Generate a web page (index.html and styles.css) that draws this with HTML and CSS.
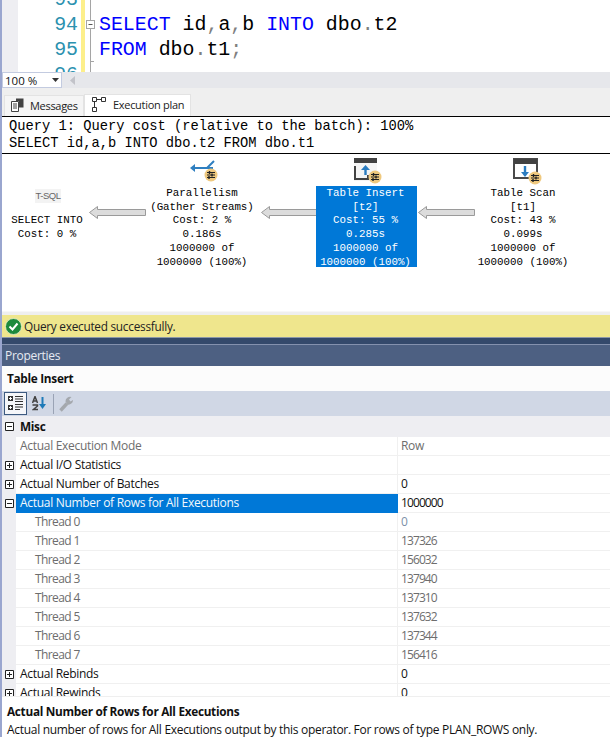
FILE: index.html
```html
<!DOCTYPE html>
<html lang="en">
<head>
<meta charset="utf-8">
<title>Execution plan</title>
<link rel="stylesheet" href="styles.css">
</head>
<body>
<svg class="defs" width="0" height="0">
  <defs>
    <g id="badge">
      <circle cx="7" cy="7" r="6.5" fill="#efc97f"/>
      <path d="M3 4.5h8M3 7h8M3 9.5h8" stroke="#222" stroke-width="1.2"/>
      <path d="M5.5 3v3M8 5.5v3M5 8v3" stroke="#222" stroke-width="1.4"/>
    </g>
  </defs>
</svg>
<main class="window">
  <section class="editor">
    <div class="margin"></div>
    <div class="numbers">
      <div class="line">93</div>
      <div class="line">94</div>
      <div class="line">95</div>
      <div class="line">96</div>
    </div>
    <div class="change"></div>
    <div class="fold">
      <svg width="14" height="72" viewBox="0 0 14 72">
        <path d="M5.500 0V20M5.500 29V72M5.500 61.500H9" stroke="#a5a5a5" fill="none"/>
        <rect x="1.500" y="20.500" width="8" height="8" fill="#fff" stroke="#a5a5a5"/>
        <path d="M3.500 24.500h4" stroke="#555"/>
      </svg>
    </div>
    <div class="code">
      <div class="line"></div>
      <div class="line"><span class="kw">SELECT</span> id<span class="op">,</span>a<span class="op">,</span>b <span class="kw">INTO</span> dbo<span class="op">.</span>t2</div>
      <div class="line"><span class="kw">FROM</span> dbo<span class="op">.</span>t1<span class="op">;</span></div>
    </div>
  </section>

  <div class="zoombar">
    <div class="combo"><span>100 %</span><svg width="7" height="4" viewBox="0 0 7 4"><path d="M0 0h7L3.500 4z" fill="#333"/></svg></div>
    <svg class="scroll-left" width="6" height="9" viewBox="0 0 6 9"><path d="M5 0v9L0 4.500z" fill="#c2c3c9"/></svg>
  </div>

  <div class="tabs">
    <div class="tab">
      <svg width="13" height="14" viewBox="0 0 13 14">
        <path d="M.500 3.500h7v10h-7z" fill="#fff" stroke="#424242"/>
        <path d="M2 6h4M2 8h4M2 10h4" stroke="#424242"/>
        <path d="M5 .500h7.500v9H8V3H5z" fill="#424242"/>
      </svg>
      <span>Messages</span>
    </div>
    <div class="tab tab-active">
      <svg width="15" height="16" viewBox="0 0 15 16">
        <path d="M.500.500h4v4h-4zM9.500.500h4v4h-4zM.500 10.500h4v4h-4z" fill="#fff" stroke="#333"/>
        <path d="M4.500 2.500h5M2.500 4.500v6" stroke="#333"/>
      </svg>
      <span>Execution plan</span>
    </div>
  </div>

  <section class="plan">
    <div class="plan-head">
      <div class="plan-line">Query 1: Query cost (relative to the batch): 100%</div>
      <div class="plan-line">SELECT id,a,b INTO dbo.t2 FROM dbo.t1</div>
    </div>
    <div class="canvas">
      <div class="tsql">T-SQL</div>
      <div class="node node-select">SELECT INTO<br>Cost: 0 %</div>

      <svg class="arrow arrow-a" width="57" height="13" viewBox="0 0 57 13"><path d="M.500 6.500 8.500 .500v3h48v6h-48v3z" fill="#dcdcdc" stroke="#9a9a9a"/></svg>

      <svg class="icon icon-par" width="30" height="28" viewBox="0 0 30 28">
        <path d="M3 10h15l7-7M18 10l6 0" fill="none" stroke="#2f7fc0" stroke-width="2"/>
        <path d="M1 10l5-4v8z" fill="#2f7fc0"/>
        <use href="#badge" x="15" y="10"/>
      </svg>
      <div class="node node-par">Parallelism<br>(Gather Streams)<br>Cost: 2 %<br>0.186s<br>1000000 of<br>1000000 (100%)</div>

      <svg class="arrow arrow-b" width="57" height="13" viewBox="0 0 57 13"><path d="M.500 6.500 8.500 .500v3h48v6h-48v3z" fill="#dcdcdc" stroke="#9a9a9a"/></svg>

      <svg class="icon icon-ins" width="30" height="28" viewBox="0 0 30 28">
        <rect x="1" y="1" width="23" height="23" fill="#f5f5f5"/>
        <rect x="1" y="1" width="23" height="5" fill="#424242"/>
        <path d="M2 9v13h13v-4" fill="none" stroke="#424242" stroke-width="2"/>
        <path d="M12.500 18V10" stroke="#2a7cc0" stroke-width="2.400"/>
        <path d="M8 13l4.500-5 4.500 5z" fill="#2a7cc0"/>
        <use href="#badge" x="15" y="13"/>
      </svg>
      <div class="node node-ins">Table Insert<br>[t2]<br>Cost: 55 %<br>0.285s<br>1000000 of<br>1000000 (100%)</div>

      <svg class="arrow arrow-c" width="57" height="13" viewBox="0 0 57 13"><path d="M.500 6.500 8.500 .500v3h48v6h-48v3z" fill="#dcdcdc" stroke="#9a9a9a"/></svg>

      <svg class="icon icon-scan" width="30" height="28" viewBox="0 0 30 28">
        <rect x="1" y="1" width="23" height="19" fill="#fff" stroke="#4a4a4a" stroke-width="2"/>
        <rect x="1" y="1" width="23" height="5" fill="#424242"/>
        <path d="M12 8v8" stroke="#2a7cc0" stroke-width="2.400"/>
        <path d="M8 14l4 5 4-5z" fill="#2a7cc0"/>
        <use href="#badge" x="15" y="13"/>
      </svg>
      <div class="node node-scan">Table Scan<br>[t1]<br>Cost: 43 %<br>0.099s<br>1000000 of<br>1000000 (100%)</div>
    </div>
  </section>

  <div class="status-gap"></div>
  <div class="status">
    <svg width="17" height="17" viewBox="0 0 17 17">
      <circle cx="8.500" cy="8.500" r="8" fill="#1d8a3c" stroke="#e8f0d0" stroke-width=".800"/>
      <path d="M4.500 8.500l3 3 5-6" fill="none" stroke="#fff" stroke-width="2"/>
    </svg>
    <span>Query executed successfully.</span>
  </div>
  <div class="splitter"></div>

  <section class="props">
    <header class="props-title">Properties</header>
    <div class="props-object">Table Insert</div>
    <div class="props-tools">
      <button class="tool tool-on" type="button" aria-label="Categorized">
        <svg width="16" height="15" viewBox="0 0 16 15">
          <path d="M0 0h5v5H0zM0 9h5v5H0z" fill="#333"/>
          <path d="M1 2.500h3M2.500 1v3M1 11.500h3M2.500 10v3" stroke="#fff"/>
          <path d="M7 .500h8M7 3h8M7 5.500h8M7 8.500h8M7 11h8M7 13.500h5" stroke="#333"/>
        </svg>
      </button>
      <div class="tool">
        <svg width="15" height="15" viewBox="0 0 15 15">
          <path d="M.500 7 3 .500 5.500 7M1.500 5h3M.500 9h5v1l-4 3.500h4.500" fill="none" stroke="#424242" stroke-width="1.500"/>
          <path d="M10.500 1v10" stroke="#1e7ab8" stroke-width="2"/>
          <path d="M7 8l3.500 5L14 8z" fill="#1e7ab8"/>
        </svg>
      </div>
      <div class="tool-sep"></div>
      <div class="tool">
        <svg width="16" height="16" viewBox="0 0 16 16">
          <path d="M1.500 14.500 8 7.500" stroke="#a4a8ad" stroke-width="3.400"/>
          <path d="M6.500 5.500a4.500 4.500 0 0 1 6-4.500l-2.500 2.500 1.500 2 2.500-1.500a4.500 4.500 0 0 1-5.500 4.500z" fill="#a4a8ad"/>
        </svg>
      </div>
    </div>
    <div class="cat"><svg class="box" width="9" height="9" viewBox="0 0 9 9"><path d="M.500.500h8v8h-8z" fill="#fff" stroke="#222"/><path d="M2 4.500h5" stroke="#222"/></svg><span>Misc</span></div>

    <div class="grid">
      <div class="row ro"><div class="exp"></div><div class="name">Actual Execution Mode</div><div class="val">Row</div></div>
      <div class="row"><div class="exp"><svg class="box" width="9" height="9" viewBox="0 0 9 9"><path d="M.500.500h8v8h-8z" fill="#fff" stroke="#222"/><path d="M2 4.500h5M4.500 2v5" stroke="#222"/></svg></div><div class="name">Actual I/O Statistics</div><div class="val"></div></div>
      <div class="row"><div class="exp"><svg class="box" width="9" height="9" viewBox="0 0 9 9"><path d="M.500.500h8v8h-8z" fill="#fff" stroke="#222"/><path d="M2 4.500h5M4.500 2v5" stroke="#222"/></svg></div><div class="name">Actual Number of Batches</div><div class="val">0</div></div>
      <div class="row row-sel"><div class="exp"><svg class="box" width="9" height="9" viewBox="0 0 9 9"><path d="M.500.500h8v8h-8z" fill="#fff" stroke="#222"/><path d="M2 4.500h5" stroke="#222"/></svg></div><div class="name">Actual Number of Rows for All Executions</div><div class="val num">1000000</div></div>
      <div class="row ro sub"><div class="exp"></div><div class="name">Thread 0</div><div class="val val-blue">0</div></div>
      <div class="row ro sub"><div class="exp"></div><div class="name">Thread 1</div><div class="val num">137326</div></div>
      <div class="row ro sub"><div class="exp"></div><div class="name">Thread 2</div><div class="val num">156032</div></div>
      <div class="row ro sub"><div class="exp"></div><div class="name">Thread 3</div><div class="val num">137940</div></div>
      <div class="row ro sub"><div class="exp"></div><div class="name">Thread 4</div><div class="val num">137310</div></div>
      <div class="row ro sub"><div class="exp"></div><div class="name">Thread 5</div><div class="val num">137632</div></div>
      <div class="row ro sub"><div class="exp"></div><div class="name">Thread 6</div><div class="val num">137344</div></div>
      <div class="row ro sub"><div class="exp"></div><div class="name">Thread 7</div><div class="val num">156416</div></div>
      <div class="row"><div class="exp"><svg class="box" width="9" height="9" viewBox="0 0 9 9"><path d="M.500.500h8v8h-8z" fill="#fff" stroke="#222"/><path d="M2 4.500h5M4.500 2v5" stroke="#222"/></svg></div><div class="name">Actual Rebinds</div><div class="val">0</div></div>
      <div class="row"><div class="exp"><svg class="box" width="9" height="9" viewBox="0 0 9 9"><path d="M.500.500h8v8h-8z" fill="#fff" stroke="#222"/><path d="M2 4.500h5M4.500 2v5" stroke="#222"/></svg></div><div class="name">Actual Rewinds</div><div class="val">0</div></div>
    </div>
    <div class="desc">
      <div class="desc-title">Actual Number of Rows for All Executions</div>
      <div class="desc-text">Actual number of rows for All Executions output by this operator. For rows of type PLAN_ROWS only.</div>
    </div>
  </section>
</main>
</body>
</html>
```
FILE: styles.css
```css
* { box-sizing: border-box; }
html, body { margin: 0; padding: 0; background: #fff; }
body { width: 610px; height: 737px; overflow: hidden; }
.defs { position: absolute; }
.window {
  width: 610px; height: 737px; overflow: hidden;
  border-left: 2px solid #9aa6cf;
  display: flex; flex-direction: column;
  font-family: "Open Sans", "Noto Sans", sans-serif;
  font-size: 12px; letter-spacing: -.3px; color: #111;
}

/* editor */
.editor { height: 72px; flex: none; display: flex; overflow: hidden; background: #fff; letter-spacing: 0; }
.margin { width: 16px; background: #eeeef2; }
.numbers { width: 60px; margin-top: -13px; text-align: right; color: #2b91af; font-family: "Liberation Mono", monospace; font-size: 19.900px; }
.line { height: 25px; line-height: 25px; white-space: pre; }
.change { width: 4px; margin-left: 3px; background: #fdef8a; }
.fold { width: 14px; }
.code { margin-top: -13px; font-family: "Liberation Mono", monospace; font-size: 19.900px; color: #000; }
.kw { color: #0000ff; }
.op { color: #808080; }

/* zoom bar */
.zoombar { height: 16px; flex: none; background: #e6e7eb; display: flex; align-items: center; gap: 8px; }
.combo { width: 60px; height: 16px; background: #fff; border: 1px solid #c3cbe0; display: flex; align-items: center; justify-content: space-between; padding: 0 2px; font-size: 11.500px; letter-spacing: 0; }
.scroll-left { flex: none; }

/* tabs */
.tabs { height: 28px; flex: none; background: #efefef; display: flex; align-items: flex-end; padding-left: 2px; }
.tab { height: 21px; width: 80px; display: flex; align-items: center; gap: 6px; padding: 0 0 2px 6px; background: #f5f5f5; border: 1px solid #e3e3e3; border-bottom: 0; font-size: 11px; letter-spacing: -.3px; color: #222; }
.tab-active { height: 22px; width: 107px; background: #fff; padding-left: 7px; }

/* plan */
.plan { height: 195px; flex: none; display: flex; flex-direction: column; letter-spacing: 0; }
.plan-head { height: 38px; flex: none; border-top: 1px solid #000; border-bottom: 1px solid #000; padding: 1px 0 0 7px; font-family: "Liberation Mono", monospace; font-size: 13.750px; line-height: 17px; color: #000; }
.plan-line { white-space: pre; }
.canvas { position: relative; flex: 1; }
.node { position: absolute; padding-top: 1px; text-align: center; white-space: pre; font-family: "Liberation Mono", monospace; font-size: 10.800px; line-height: 13.700px; color: #000; }
.node-select { left: 0; width: 90px; top: 59px; }
.node-par { left: 147px; width: 106px; top: 32px; }
.node-ins { left: 314px; width: 101px; height: 81px; top: 32px; padding-right: 2px; background: #0078d7; color: #fff; }
.node-scan { left: 468px; width: 106px; top: 32px; }
.tsql { position: absolute; left: 33px; top: 35px; width: 26px; height: 14px; line-height: 14px; background: #f3f3f3; text-align: center; font-family: "Liberation Sans", sans-serif; font-size: 9.500px; letter-spacing: -.5px; color: #666; }
.arrow, .icon { position: absolute; }
.arrow-a { left: 87px; top: 52px; }
.arrow-b { left: 259px; top: 52px; }
.arrow-c { left: 416px; top: 52px; }
.icon-par { left: 187px; top: 4px; }
.icon-ins { left: 351px; top: 3px; }
.icon-scan { left: 511px; top: 4px; }

/* status */
.status-gap { height: 4px; flex: none; background: #efefef; border-top: 1px solid #f7f7f7; }
.status { height: 22px; flex: none; background: #efe68d; display: flex; align-items: center; gap: 2px; padding-left: 3px; font-size: 11.800px; letter-spacing: -.25px; color: #222; }
.splitter { height: 8px; flex: none; background: #34496b; border-top: 1px solid #8c98a8; border-bottom: 1px solid #8491ae; }

/* properties */
.props { flex: 1; min-height: 0; display: flex; flex-direction: column; }
.props-title { height: 21px; flex: none; background: #4d6082; color: #e6eaf2; padding-left: 3px; line-height: 21px; font-size: 12px; }
.props-object { height: 25px; flex: none; background: #fcfcfc; padding-left: 5px; line-height: 24px; font-weight: 700; font-size: 11.800px; letter-spacing: -.3px; color: #111; }
.props-tools { height: 25px; flex: none; background: #d0d7e5; display: flex; align-items: center; padding-left: 2px; gap: 1px; }
.tool { width: 23px; height: 23px; padding: 0; display: flex; align-items: center; justify-content: center; background: transparent; border: 1px solid transparent; }
.tool-on { background: #f5f6f9; border-color: #3d5a80; }
.tool-sep { width: 1px; height: 20px; background: #9aa3b5; margin: 0 0 0 1px; }
.cat { height: 21px; flex: none; background: #eeeef2; display: flex; align-items: center; gap: 6px; padding: 0 0 1px 3px; font-weight: 700; font-size: 11.800px; }
.box { display: block; flex: none; }
.grid { height: 260px; flex: none; overflow: hidden; border-bottom: 1px solid #efefef; }
.row { height: 19px; display: grid; grid-template-columns: 14px 382px 1fr; }
.exp { background: #eeeef2; display: flex; align-items: center; padding-left: 3px; }
.name { padding-left: 4px; line-height: 18px; border-bottom: 1px solid #f0f0f0; border-right: 1px solid #f0f0f0; white-space: nowrap; }
.val { padding-left: 3px; line-height: 18px; border-bottom: 1px solid #f0f0f0; }
.num { letter-spacing: -.9px; }
.ro .name, .ro .val { color: #6d6d6d; }
.sub .name { padding-left: 19px; letter-spacing: -.6px; }
.ro .val-blue { color: #7d8fa8; }
.row-sel .name { background: #0078d7; color: #f4f8fc; border-color: #0078d7; }
.desc { flex: 1; min-height: 0; padding: 5px 0 0 5px; background: #fff; }
.desc-title { height: 18px; line-height: 18px; font-weight: 700; font-size: 11.800px; letter-spacing: -.3px; }
.desc-text { height: 19px; line-height: 19px; white-space: nowrap; }
```
